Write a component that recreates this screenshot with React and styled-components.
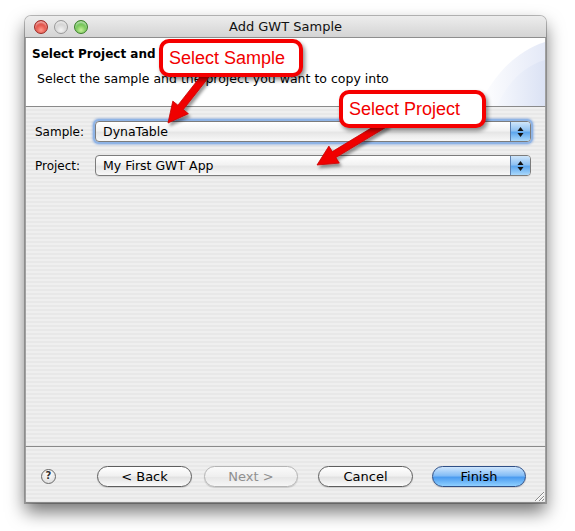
import React from "react";
import styled, { createGlobalStyle } from "styled-components";

const Global = createGlobalStyle`
  html, body { margin: 0; padding: 0; background: #ffffff; }
  body { font-family: "DejaVu Sans", "Liberation Sans", sans-serif; }
`;

const Stage = styled.div`
  position: relative;
  width: 575px;
  height: 531px;
  padding: 16px 0 0 25px;
  box-sizing: border-box;
  overflow: hidden;
`;

const Window = styled.div`
  width: 521px;
  height: 487px;
  display: flex;
  flex-direction: column;
  border-radius: 6px 6px 0 0;
  box-shadow: 0 9px 18px rgba(0, 0, 0, 0.55), 0 0 0 1px rgba(0, 0, 0, 0.25);
  background: #ededed;
`;

const TitleBar = styled.div`
  height: 22px;
  flex: none;
  display: flex;
  align-items: center;
  position: relative;
  border-radius: 6px 6px 0 0;
  background: linear-gradient(#ededed, #d4d4d4);
  border-bottom: 1px solid #8e8e8e;
  box-sizing: border-box;
  padding-left: 9px;
`;

const Lights = styled.div`
  display: flex;
  gap: 6px;
  margin-top: 1px;
`;

const Light = styled.span`
  width: 14px;
  height: 14px;
  border-radius: 50%;
  box-sizing: border-box;
  border: 1px solid ${(p) => p.$edge};
  background: radial-gradient(circle at 50% 75%, ${(p) => p.$light} 0%, ${(p) => p.$base} 70%);
  box-shadow: inset 0 2px 2px rgba(255, 255, 255, 0.6);
`;

const Title = styled.div`
  position: absolute;
  left: 0;
  right: 0;
  top: 3px;
  text-align: center;
  font-size: 13px;
  color: #111;
  pointer-events: none;
`;

const Banner = styled.div`
  height: 68px;
  flex: none;
  background: #ffffff;
  border-left: 1px solid #a0a0a0;
  border-right: 1px solid #a0a0a0;
  border-bottom: 1px solid #8a8a8a;
  display: flex;
  position: relative;
  overflow: hidden;
`;

const BannerText = styled.div`
  flex: 1;
  padding: 9px 0 0 6px;
`;

const BannerTitle = styled.div`
  font-size: 12px;
  font-weight: bold;
  color: #000;
  height: 15px;
`;

const BannerDesc = styled.div`
  font-size: 12.5px;
  color: #000;
  margin: 9px 0 0 5px;
`;

const BannerArt = styled.svg`
  width: 66px;
  height: 68px;
  flex: none;
`;

const Content = styled.div`
  flex: 1;
  border-left: 1px solid #a0a0a0;
  border-right: 1px solid #a0a0a0;
  border-bottom: 1px solid #8a8a8a;
  background: repeating-linear-gradient(#efefef 0 2px, #e8e8e8 2px 4px);
  padding: 14px 14px 0 9px;
  display: flex;
  flex-direction: column;
  gap: 13px;
`;

const Row = styled.div`
  display: flex;
  align-items: center;
`;

const Label = styled.div`
  width: 60px;
  font-size: 12px;
  color: #000;
`;

const Combo = styled.div`
  flex: 1;
  height: 21px;
  box-sizing: border-box;
  border: 1px solid #7c7c7c;
  border-radius: 4px;
  display: flex;
  align-items: stretch;
  overflow: hidden;
  background: linear-gradient(#ffffff 0%, #f2f2f2 45%, #e6e6e6 55%, #f8f8f8 100%);
  box-shadow: ${(p) =>
    p.$focus ? "0 0 0 2px #8fb4e6, 0 0 2px 3px rgba(120,160,220,0.55)" : "0 1px 0 rgba(0,0,0,0.08)"};
`;

const ComboText = styled.div`
  flex: 1;
  font-size: 12.5px;
  color: #000;
  padding-left: 7px;
  display: flex;
  align-items: center;
`;

const ComboArrow = styled.div`
  width: 19px;
  border-left: 1px solid #5a7fb0;
  background: linear-gradient(#cfe6fb 0%, #8fc2f3 45%, #5ea7ee 55%, #a9d8fb 100%);
  display: flex;
  align-items: center;
  justify-content: center;
`;

const ButtonBar = styled.div`
  height: 56px;
  flex: none;
  border-left: 1px solid #a0a0a0;
  border-right: 1px solid #a0a0a0;
  border-bottom: 1px solid #8a8a8a;
  box-sizing: border-box;
  background: repeating-linear-gradient(#efefef 0 2px, #e8e8e8 2px 4px);
  display: flex;
  align-items: center;
  padding: 3px 19px 0 15px;
  position: relative;
`;

const Help = styled.div`
  width: 15px;
  height: 15px;
  box-sizing: border-box;
  border-radius: 50%;
  border: 1px solid #6a6a6a;
  background: radial-gradient(circle at 50% 30%, #ffffff, #d8d8d8);
  font-size: 10px;
  font-weight: bold;
  color: #333;
  display: flex;
  align-items: center;
  justify-content: center;
  line-height: 1;
`;

const Spacer = styled.div`
  flex: 1;
`;

const Button = styled.div`
  width: ${(p) => p.$w || 95}px;
  height: 21px;
  box-sizing: border-box;
  margin-left: ${(p) => p.$ml || 0}px;
  border-radius: 11px;
  border: 1px solid ${(p) => (p.$primary ? "#2f4f86" : p.$disabled ? "#b4b4b4" : "#5e5e5e")};
  background: ${(p) =>
    p.$primary
      ? "linear-gradient(#cfe6fd 0%, #84bdf6 45%, #4c9cf0 55%, #8fd0ff 100%)"
      : p.$disabled
      ? "linear-gradient(#fafafa 0%, #efefef 50%, #e8e8e8 55%, #f6f6f6 100%)"
      : "linear-gradient(#ffffff 0%, #f1f1f1 45%, #e2e2e2 55%, #fbfbfb 100%)"};
  color: ${(p) => (p.$disabled ? "#8f8f8f" : "#000")};
  font-size: 13px;
  display: flex;
  align-items: center;
  justify-content: center;
  box-shadow: 0 1px 1px rgba(0, 0, 0, 0.15);
`;

const Grip = styled.svg`
  position: absolute;
  right: 0;
  bottom: 0;
  width: 13px;
  height: 13px;
`;

const Overlay = styled.svg`
  position: absolute;
  left: 0;
  top: 0;
  width: 575px;
  height: 531px;
  pointer-events: none;
`;

const Callout = styled.div`
  position: absolute;
  left: ${(p) => p.$x}px;
  top: ${(p) => p.$y}px;
  width: ${(p) => p.$w}px;
  height: 38px;
  box-sizing: border-box;
  border: 4px solid #f50000;
  border-radius: 10px;
  background: #ffffff;
  box-shadow: 2px 3px 4px rgba(0, 0, 0, 0.45);
  font-family: "Liberation Sans", Arial, sans-serif;
  font-size: 18px;
  color: #f20000;
  display: flex;
  align-items: center;
  padding-left: 6px;
`;

const UpDown = () => (
  <svg width="7" height="12" viewBox="0 0 7 12">
    <path d="M3.5 1 L6.5 5 L0.5 5 Z" fill="#111" />
    <path d="M3.5 11 L6.5 7 L0.5 7 Z" fill="#111" />
  </svg>
);

const Arrow = ({ points }) => (
  <polygon points={points} fill="#f00000" stroke="#c80000" strokeWidth="0.8" strokeLinejoin="round" />
);

export default function App() {
  return (
    <>
      <Global />
      <Stage>
        <Window>
          <TitleBar>
            <Lights>
              <Light $base="#d8342c" $light="#ff9a8c" $edge="#9a2a24" />
              <Light $base="#c9c9c9" $light="#f4f4f4" $edge="#9a9a9a" />
              <Light $base="#52b43a" $light="#c6f09a" $edge="#3c7f2a" />
            </Lights>
            <Title>Add GWT Sample</Title>
          </TitleBar>
          <Banner>
            <BannerText>
              <BannerTitle>Select Project and Sample</BannerTitle>
              <BannerDesc>Select the sample and the project you want to copy into</BannerDesc>
            </BannerText>
            <BannerArt viewBox="0 0 66 68">
              <defs>
                <linearGradient id="bg1" x1="0" y1="0" x2="1" y2="0">
                  <stop offset="0" stopColor="#ffffff" />
                  <stop offset="1" stopColor="#e4e9f7" />
                </linearGradient>
                <linearGradient id="bg2" x1="0" y1="0" x2="1" y2="0">
                  <stop offset="0" stopColor="#f6f8fd" />
                  <stop offset="1" stopColor="#dbe2f4" />
                </linearGradient>
              </defs>
              <path d="M0 68 C 12 42, 34 14, 66 4 L66 68 Z" fill="url(#bg1)" />
              <path d="M18 68 C 28 46, 44 28, 66 22 L66 68 Z" fill="url(#bg2)" />
            </BannerArt>
          </Banner>
          <Content>
            <Row>
              <Label>Sample:</Label>
              <Combo $focus>
                <ComboText>DynaTable</ComboText>
                <ComboArrow>
                  <UpDown />
                </ComboArrow>
              </Combo>
            </Row>
            <Row>
              <Label>Project:</Label>
              <Combo>
                <ComboText>My First GWT App</ComboText>
                <ComboArrow>
                  <UpDown />
                </ComboArrow>
              </Combo>
            </Row>
          </Content>
          <ButtonBar>
            <Help>?</Help>
            <Spacer />
            <Button>&lt; Back</Button>
            <Button $disabled $ml={12} $w={94}>
              Next &gt;
            </Button>
            <Button $ml={20}>Cancel</Button>
            <Button $primary $ml={19} $w={94}>
              Finish
            </Button>
            <Grip viewBox="0 0 13 13">
              <path d="M12 3 L3 12 M12 7 L7 12 M12 10 L10 12" stroke="#8a8a8a" strokeWidth="1" />
              <path d="M12 4 L4 12 M12 8 L8 12" stroke="#ffffff" strokeWidth="1" />
            </Grip>
          </ButtonBar>
        </Window>
        <Overlay viewBox="0 0 575 531">
          <defs>
            <filter id="sh" x="-20%" y="-20%" width="140%" height="140%">
              <feDropShadow dx="2" dy="3" stdDeviation="1.5" floodColor="#000" floodOpacity="0.4" />
            </filter>
          </defs>
          <g filter="url(#sh)">
            <Arrow points="214.5,70 183.3,109.6 188.4,113.7 168,123 172.8,101.1 177.9,105.2 209,65.6" />
            <Arrow points="388.4,125.8 335.9,157.6 339.3,163.1 317,165 328.9,146.1 332.3,151.6 384.8,119.8" />
          </g>
        </Overlay>
        <Callout $x={159} $y={39} $w={144}>
          Select Sample
        </Callout>
        <Callout $x={339} $y={90} $w={147}>
          Select Project
        </Callout>
      </Stage>
    </>
  );
}
